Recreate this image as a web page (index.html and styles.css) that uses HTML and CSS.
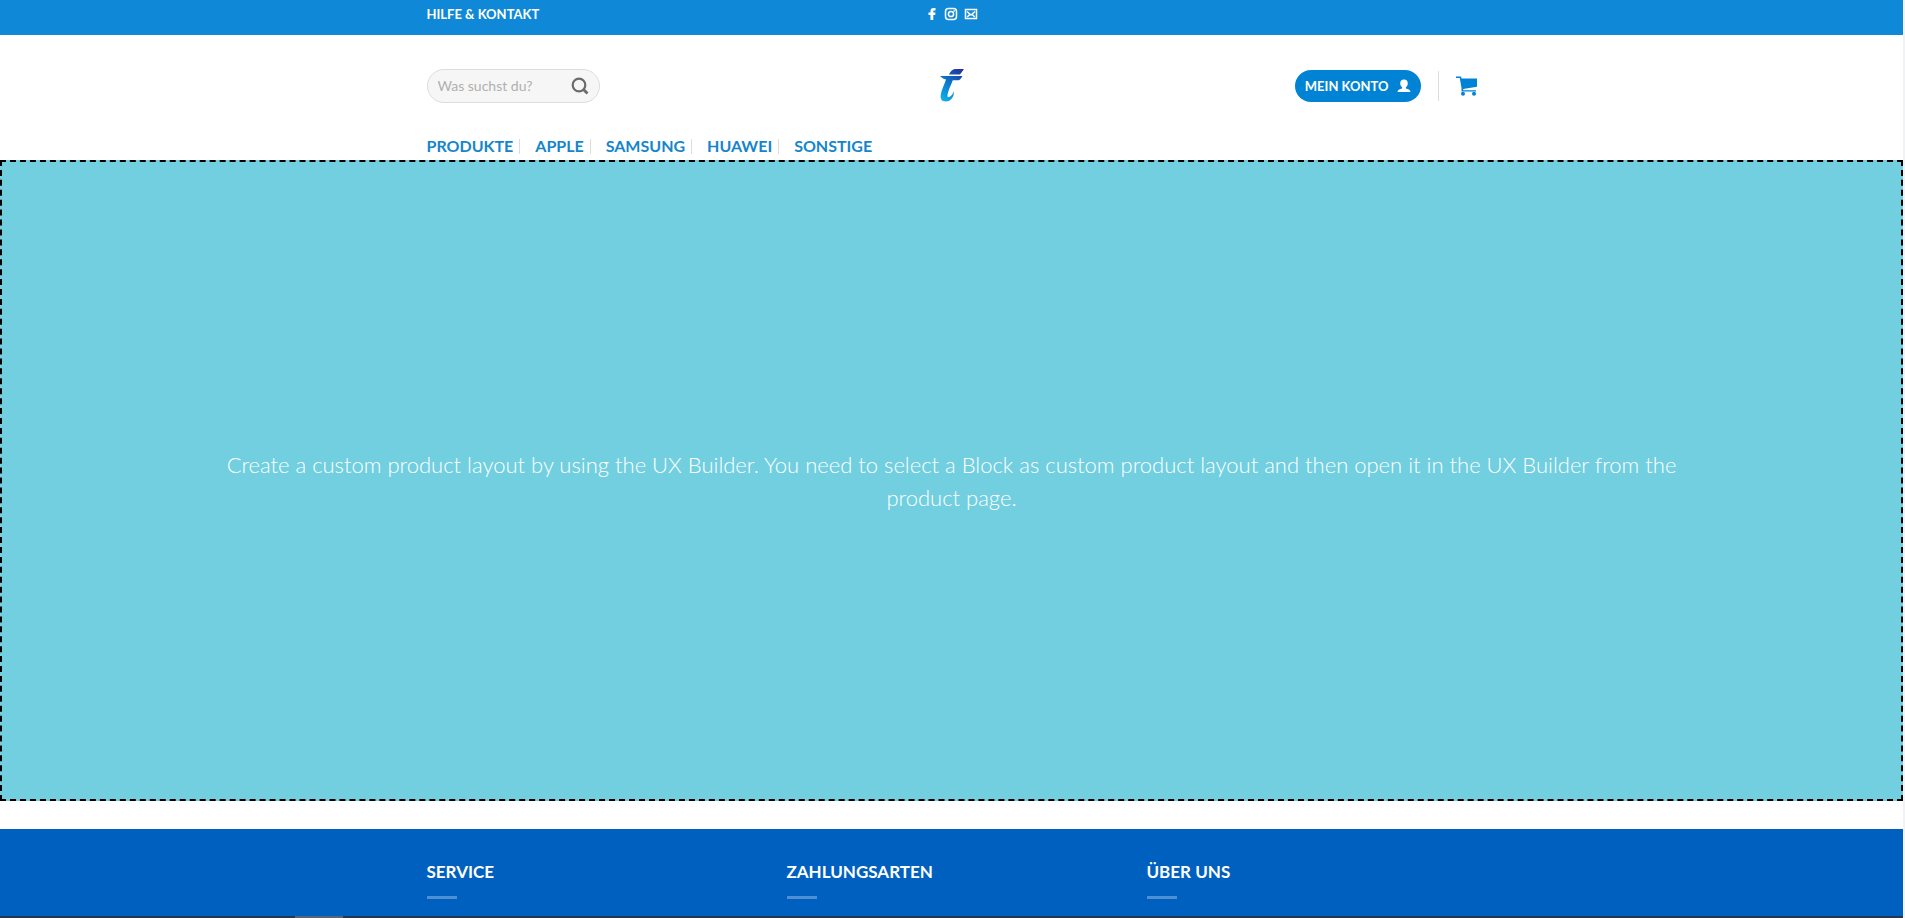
FILE: index.html
```html
<!DOCTYPE html>
<html lang="de">
<head>
    <meta charset="UTF-8">
    <meta name="viewport" content="width=device-width, initial-scale=1.0">
    <title>Produkt</title>
    <link rel="stylesheet" href="styles.css">
</head>
<body>
    <!-- Top Bar -->
    <div class="top-bar">
        <div class="container row">
            <div class="col-left">
                <a href="#" class="top-link">HILFE &amp; KONTAKT</a>
            </div>
            <div class="social">
                <a href="#" aria-label="Facebook">
                    <svg width="12" height="14" viewBox="0 0 12 14"><path d="M4.500 13V8H2.500V5.500h2V4c0-2 1-3 3-3h2v2.400H8.300C7.500 3.400 7.300 3.700 7.300 4.400v1.100h2.200L9.200 8H7.300v5z" fill="#fff"/></svg>
                </a>
                <a href="#" aria-label="Instagram">
                    <svg width="14" height="14" viewBox="0 0 14 14" fill="none" stroke="#fff" stroke-width="1.500"><rect x="1.500" y="1.500" width="11" height="11" rx="3"/><circle cx="7" cy="7" r="2.600"/><circle cx="10.200" cy="3.900" r=".8" fill="#fff" stroke="none"/></svg>
                </a>
                <a href="#" aria-label="E-Mail">
                    <svg width="14" height="14" viewBox="0 0 14 14" fill="none" stroke="#fff" stroke-width="1.500"><rect x="1.500" y="2.500" width="11" height="9"/><path d="M3 4.500l4 3.500 4-3.500M3.200 10l2.300-2.300M10.800 10L8.500 7.700"/></svg>
                </a>
            </div>
            <div class="col-right"></div>
        </div>
    </div>

    <!-- Header -->
    <header class="header">
        <div class="container row header-main">
            <div class="col-left">
                <form class="search">
                    <input type="search" placeholder="Was suchst du?" aria-label="Suche">
                    <button type="submit" aria-label="Suchen">
                        <svg width="18" height="18" viewBox="0 0 18 18" fill="none" stroke="#6b6b6b" stroke-width="2.200"><circle cx="8" cy="8" r="6.300"/><path d="M12.500 12.500l4 4" stroke-width="2.800"/></svg>
                    </button>
                </form>
            </div>
            <a href="#" class="logo" aria-label="Startseite">
                <svg width="26" height="36" viewBox="0 0 26 36">
                    <defs>
                        <linearGradient id="logoFill" gradientUnits="userSpaceOnUse" x1="3" y1="32" x2="23" y2="2">
                            <stop offset="0" stop-color="#10b0e8"/>
                            <stop offset=".5" stop-color="#0878cc"/>
                            <stop offset="1" stop-color="#26309a"/>
                        </linearGradient>
                    </defs>
                    <path d="M10 6.500C11.500 3 13.500 1 17 1h8l-4 5.500z" fill="url(#logoFill)"/>
                    <path d="M1 8h22.500l-2 3c-.8 1-1.500 1.300-3 1.300h-4.700C12 17 8.500 24 8.500 28c0 2.500 4 1 6.500-4.500 0 5.500-3 10-8.200 10-4.600 0-6-3.500-4.800-8C3 21 5.500 16 7 11.500 4.500 11 2.500 9.500 1 8z" fill="url(#logoFill)"/>
                </svg>
            </a>
            <div class="col-right">
                <a href="#" class="account">
                    MEIN KONTO
                    <svg width="14" height="14" viewBox="0 0 14 14"><path d="M7 .5c2.500 0 3.800 1.600 3.800 3.800 0 1.800-.8 3.200-1.900 4v1.200c2.600.6 4.600 1.500 4.600 3.500H.5c0-2 2-2.900 4.600-3.500V8.300c-1.100-.8-1.900-2.200-1.900-4C3.200 2.100 4.500.5 7 .5z" fill="#fff"/></svg>
                </a>
                <span class="divider"></span>
                <a href="#" class="cart" aria-label="Warenkorb">
                    <svg width="21" height="20" viewBox="0 0 21 20" fill="#0083d5"><path d="M0 .5h5l.6 2H21v8.200L7.200 13v1.200H20v1.300H5.500V12L3.800 2H0z"/><circle cx="7" cy="17.800" r="2"/><circle cx="18" cy="17.800" r="2"/></svg>
                </a>
            </div>
        </div>
        <nav class="container nav">
            <a href="#">PRODUKTE</a>
            <a href="#">APPLE</a>
            <a href="#">SAMSUNG</a>
            <a href="#">HUAWEI</a>
            <a href="#">SONSTIGE</a>
        </nav>
    </header>

    <!-- Custom Layout -->
    <main class="banner">
        <p>Create a custom product layout by using the UX Builder. You need to select a Block as custom product layout and then open it in the UX Builder from the product page.</p>
    </main>

    <!-- Footer -->
    <footer class="footer">
        <div class="container footer-grid">
            <h2>SERVICE</h2>
            <h2>ZAHLUNGSARTEN</h2>
            <h2>ÜBER UNS</h2>
        </div>
    </footer>
    <div class="bottom-bar"><span></span></div>
</body>
</html>
```

FILE: styles.css
```css
* {
    box-sizing: border-box;
}
body {
    display: flex;
    flex-direction: column;
    min-height: 100vh;
    margin: 0;
    border-right: 2px solid #f0f2f3;
    background: #fff;
    font-family: Lato, sans-serif;
}
a {
    color: inherit;
    text-decoration: none;
}
svg {
    display: block;
}
.container {
    width: 100%;
    max-width: 1080px;
    margin: 0 auto;
    padding: 0 15px;
}
.row {
    display: flex;
    align-items: center;
}
.col-left,
.col-right {
    display: flex;
    flex: 1;
    align-items: center;
}
.col-right {
    justify-content: flex-end;
}

/* Top Bar */
.top-bar {
    height: 35px;
    padding-bottom: 7px;
    background: #0f88d7;
    color: #fff;
}
.top-bar .row {
    height: 28px;
}
.top-link {
    font-size: 13px;
    font-weight: bold;
}
.social {
    display: flex;
    gap: 6px;
}

/* Header */
.header-main {
    height: 101px;
}
.search {
    display: flex;
    align-items: center;
    width: 173px;
    height: 34px;
    padding: 0 10px;
    border: 1px solid #ddd;
    border-radius: 99px;
    background: #f6f6f6;
}
.search input {
    flex: 1;
    min-width: 0;
    padding: 0;
    border: 0;
    outline: 0;
    background: none;
    font-family: inherit;
    font-size: 14px;
}
.search input::placeholder {
    color: #b0b0b0;
}
.search button {
    padding: 0;
    border: 0;
    background: none;
    cursor: pointer;
}
.account {
    display: flex;
    align-items: center;
    gap: 8px;
    height: 32px;
    padding: 0 10px;
    border-radius: 99px;
    background: #0083d5;
    color: #fff;
    font-size: 13px;
    font-weight: bold;
}
.divider {
    width: 1px;
    height: 30px;
    margin: 0 17px;
    background: #ddd;
}
.nav {
    display: flex;
    height: 24px;
    color: #1585cb;
    font-size: 16px;
    font-weight: bold;
    line-height: 20px;
}
.nav a {
    display: flex;
}
.nav a:not(:last-child)::after {
    content: "";
    height: 15px;
    margin: 3px 15px 0 6px;
    border-left: 1px solid #ddd;
}

/* Custom Layout */
.banner {
    display: flex;
    flex: 1;
    align-items: center;
    justify-content: center;
    margin-bottom: 28px;
    padding: 0 200px;
    border: 2px dashed #000;
    background: #71cfdf;
    color: #fff;
    font-size: 22px;
    font-weight: 300;
    line-height: 33px;
    text-align: center;
}
.banner p {
    margin: 0;
}

/* Footer */
.footer {
    padding: 32px 0 17px;
    background: #0060c0;
    color: #fff;
}
.footer-grid {
    display: grid;
    grid-template-columns: repeat(3, 1fr);
    gap: 30px;
}
.footer h2 {
    margin: 0;
    font-size: 17px;
    line-height: 22px;
}
.footer h2::after {
    content: "";
    display: block;
    width: 30px;
    height: 3px;
    margin-top: 13px;
    background: #4d90d3;
}
.bottom-bar {
    height: 2px;
    margin-right: -2px;
    padding-left: 295px;
    background: #24374f;
}
.bottom-bar span {
    display: block;
    width: 48px;
    height: 2px;
    background: #57657b;
}
```
